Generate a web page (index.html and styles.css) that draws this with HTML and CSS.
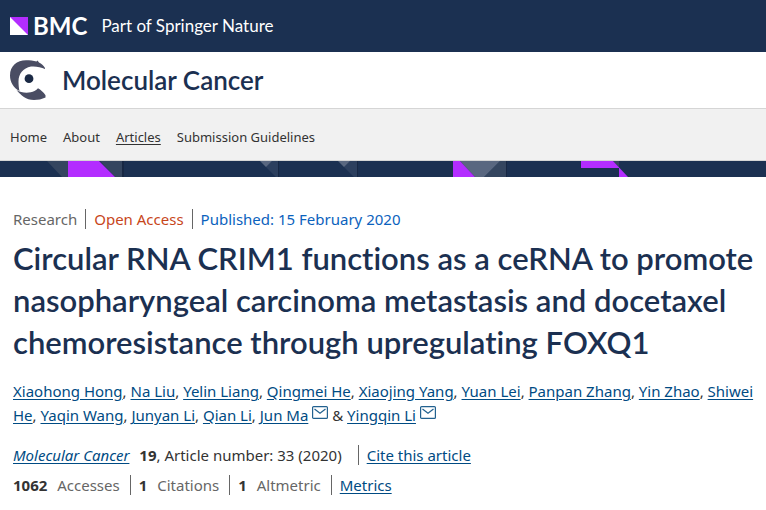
FILE: index.html
```html
<!DOCTYPE html>
<html lang="en">
<head>
<meta charset="utf-8">
<meta name="viewport" content="width=device-width, initial-scale=1">
<title>Circular RNA CRIM1 | Molecular Cancer</title>
<link rel="stylesheet" href="styles.css">
</head>
<body>
<header>
  <div class="publisher">
    <svg class="publisher-mark" viewBox="0 0 18 18" aria-hidden="true"><path fill="#fff" d="M0 0h18v18H0z"/><path fill="#b32dff" d="M0 0h18v18z"/></svg>
    <span class="publisher-name">BMC</span>
    <span class="publisher-tag">Part of Springer Nature</span>
  </div>
  <div class="journal">
    <svg class="journal-mark" viewBox="0 0 36 40" aria-hidden="true">
      <path fill="#4a4d63" d="M9.500 31C3.500 28 0 22 0 15.500 0 6 7 .3 16 .3c4 0 7.500.3 10.500 1.200L27.500.6l1.500 2c2.500 1.200 4.500 3 6 5.400v1C31 7.200 26 6 21 6.500 13 8 8.500 14 8.500 21.500c0 3.500.4 7 1 9.500z"/>
      <path fill="#4a4d63" d="M6.500 30c5 3.300 13 3.500 18 1 1.500-.8 2.600-1.700 3.500-2.700 2.700 1.500 5.500 4 7.500 6.900v2.300C32 39.200 28 40 24 40 16 39.800 11 35.500 6.500 30z"/>
      <circle cx="19" cy="18.700" r="4.400" fill="#1b2a45"/>
    </svg>
    <span class="journal-name">Molecular Cancer</span>
  </div>
  <nav class="menu" aria-label="Journal">
    <a href="#home">Home</a>
    <a href="#about">About</a>
    <a class="current" href="#articles">Articles</a>
    <a href="#guidelines">Submission Guidelines</a>
  </nav>
  <div class="banner">
    <svg class="banner-art" viewBox="0 0 766 16" preserveAspectRatio="xMinYMin slice" aria-hidden="true">
      <g fill="#34455f">
        <path d="M47 0h21v16h-6zM100 0h22v16h-7zM500 0h6v16h-22zM613 0h6v7z"/>
        <path fill="#2c3f5e" d="M266 6l6-6h6v16h-2zM344 6l6-6h7v16h-3z"/>
      </g>
      <path fill="#596780" d="M260 0h12l-6 6zM338 0h12l-6 6zM460 0h40l-16 16h-9z"/>
      <path fill="#b32dff" d="M68 0h31l16 16H68zM453 0h7l15 16h-22zM581 0h32l15 16h-9V7h-38z"/>
      <path fill="#172743" d="M122 0h2v16h-2zM278 0h1v16h-1zM357 0h1v16h-1zM506 0h1v16h-1z"/>
    </svg>
  </div>
</header>
<main class="article">
  <ul class="facts">
    <li class="kind">Research</li>
    <li class="access">Open Access</li>
    <li class="date">Published: 15 February 2020</li>
  </ul>
  <h1>Circular RNA CRIM1 functions as a ceRNA to promote nasopharyngeal carcinoma metastasis and docetaxel chemoresistance through upregulating FOXQ1</h1>
  <p class="authors"><a href="#a1">Xiaohong Hong</a>, <a href="#a2">Na Liu</a>, <a href="#a3">Yelin Liang</a>, <a href="#a4">Qingmei He</a>, <a href="#a5">Xiaojing Yang</a>, <a href="#a6">Yuan Lei</a>, <a href="#a7">Panpan Zhang</a>, <a href="#a8">Yin Zhao</a>, <a href="#a9">Shiwei He</a>, <a href="#a10">Yaqin Wang</a>, <a href="#a11">Junyan Li</a>, <a href="#a12">Qian Li</a>, <a href="#a13">Jun Ma</a><svg class="mail" viewBox="0 0 16 13" aria-hidden="true"><rect x=".6" y=".6" width="14.800" height="11.800" rx="1"/><path d="M2.500 3L8 7.300 13.500 3"/></svg> &amp; <a href="#a14">Yingqin Li</a><svg class="mail" viewBox="0 0 16 13" aria-hidden="true"><rect x=".6" y=".6" width="14.800" height="11.800" rx="1"/><path d="M2.500 3L8 7.300 13.500 3"/></svg></p>
  <ul class="facts citation">
    <li><a href="#journal"><i>Molecular Cancer</i></a> <b class="volume">19</b>, Article number: 33 (2020)</li>
    <li><a href="#cite">Cite this article</a></li>
  </ul>
  <ul class="facts metrics">
    <li><b>1062</b> Accesses</li>
    <li><b>1</b> Citations</li>
    <li><b>1</b> Altmetric</li>
    <li><a href="#metrics">Metrics</a></li>
  </ul>
</main>
</body>
</html>
```
FILE: styles.css
```css
* { box-sizing: border-box; }

body {
  margin: 0;
  background: #fff;
  color: #333;
  font: 15px/24px "Noto Sans", "Open Sans", sans-serif;
}

a { color: #004b83; text-underline-offset: 2px; }

.publisher {
  display: flex;
  align-items: center;
  height: 52px;
  padding: 0 10px;
  background: #1b3051;
  color: #fff;
  font-family: Lato, sans-serif;
}

.publisher-mark { width: 18px; height: 18px; }
.publisher-name { margin-left: 5px; font-size: 24px; font-weight: 700; }
.publisher-tag { margin-left: 14px; font-size: 17px; }

.journal {
  display: flex;
  align-items: center;
  gap: 16px;
  height: 56px;
  padding: 0 10px;
  color: #1b3051;
  font: 600 26px/36px Lato, sans-serif;
}

.journal-mark { width: 36px; height: 40px; }

.menu {
  display: flex;
  align-items: center;
  gap: 16px;
  height: 53px;
  padding: 4px 10px 0;
  border-top: 1px solid #d5d5d5;
  border-bottom: 1px solid #d5d5d5;
  background: #f1f1f1;
  font-size: 13px;
}

.menu a { color: #333; text-decoration: none; }
.menu .current { text-decoration: underline; }

.banner { height: 16px; overflow: hidden; background: #1b3051; }
.banner-art { display: block; width: 100%; height: 16px; }

.article { padding: 32px 4px 8px 13px; }

.facts {
  display: flex;
  flex-wrap: wrap;
  align-items: center;
  margin: 0;
  padding: 0;
  list-style: none;
}

.facts li { line-height: 20px; }
.facts li + li { margin-left: 8px; padding-left: 8px; border-left: 1px solid #666; }

.kind { color: #666; }
.access { color: #c7461b; }
.date { color: #0b62bd; }

h1 {
  margin: 8px 0 16px;
  color: #1b3051;
  font: 600 31px/42px Lato, sans-serif;
  font-variant-ligatures: none;
}

.authors { margin: 0; }

.mail {
  width: 16px;
  height: 13px;
  margin-left: 4px;
  vertical-align: 2px;
  fill: none;
  stroke: #22618f;
  stroke-width: 1.200;
}

.citation { margin-top: 18px; }
.citation .volume { margin-left: 6px; }
.citation li + li { margin-left: 16px; }

.metrics { margin-top: 10px; color: #666; }
.metrics li + li { margin-left: 10px; }
.metrics b { margin-right: 6px; color: #333; }
```
